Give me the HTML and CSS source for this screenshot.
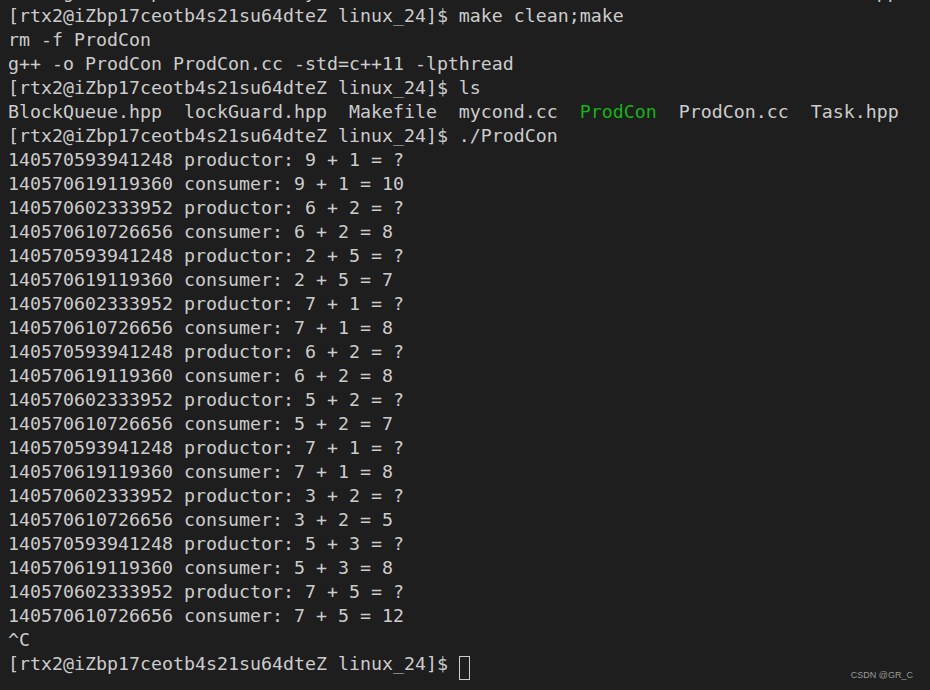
FILE: index.html
```html
<!DOCTYPE html>
<html>
<head>
<meta charset="utf-8">
<link rel="stylesheet" href="styles.css">
</head>
<body>
<div class="term">
<pre class="screen"><span class="ghost">     g       p             y              ,                                    pp</span>
[rtx2@iZbp17ceotb4s21su64dteZ linux_24]$ make clean;make
rm -f ProdCon
g++ -o ProdCon ProdCon.cc -std=c++11 -lpthread
[rtx2@iZbp17ceotb4s21su64dteZ linux_24]$ ls
BlockQueue.hpp  lockGuard.hpp  Makefile  mycond.cc  <span class="exe">ProdCon</span>  ProdCon.cc  Task.hpp
[rtx2@iZbp17ceotb4s21su64dteZ linux_24]$ ./ProdCon
140570593941248 productor: 9 + 1 = ?
140570619119360 consumer: 9 + 1 = 10
140570602333952 productor: 6 + 2 = ?
140570610726656 consumer: 6 + 2 = 8
140570593941248 productor: 2 + 5 = ?
140570619119360 consumer: 2 + 5 = 7
140570602333952 productor: 7 + 1 = ?
140570610726656 consumer: 7 + 1 = 8
140570593941248 productor: 6 + 2 = ?
140570619119360 consumer: 6 + 2 = 8
140570602333952 productor: 5 + 2 = ?
140570610726656 consumer: 5 + 2 = 7
140570593941248 productor: 7 + 1 = ?
140570619119360 consumer: 7 + 1 = 8
140570602333952 productor: 3 + 2 = ?
140570610726656 consumer: 3 + 2 = 5
140570593941248 productor: 5 + 3 = ?
140570619119360 consumer: 5 + 3 = 8
140570602333952 productor: 7 + 5 = ?
140570610726656 consumer: 7 + 5 = 12
^C
[rtx2@iZbp17ceotb4s21su64dteZ linux_24]$ <span class="cursor"> </span></pre>
<div class="watermark">CSDN @GR_C</div>
</div>
</body>
</html>
```
FILE: styles.css
```css
html, body {
  margin: 0;
  padding: 0;
  background: #1e1e1e;
}
.term {
  position: relative;
  width: 930px;
  height: 690px;
  overflow: hidden;
  background: #1e1e1e;
}
.screen {
  margin: -20px 0 0 0;
  padding: 0 0 0 8px;
  font-family: "DejaVu Sans Mono", monospace;
  font-size: 18.27px;
  line-height: 24px;
  color: #cccccc;
  white-space: pre;
}
.exe {
  color: #16b316;
}
.cursor {
  display: inline-block;
  width: 9px;
  height: 22px;
  border: 1px solid #cccccc;
  vertical-align: -5px;
}
.watermark {
  position: absolute;
  right: 17px;
  bottom: 10px;
  font-family: "Liberation Sans", Arial, sans-serif;
  font-size: 9px;
  line-height: 9px;
  color: #9a9a9a;
}
```
